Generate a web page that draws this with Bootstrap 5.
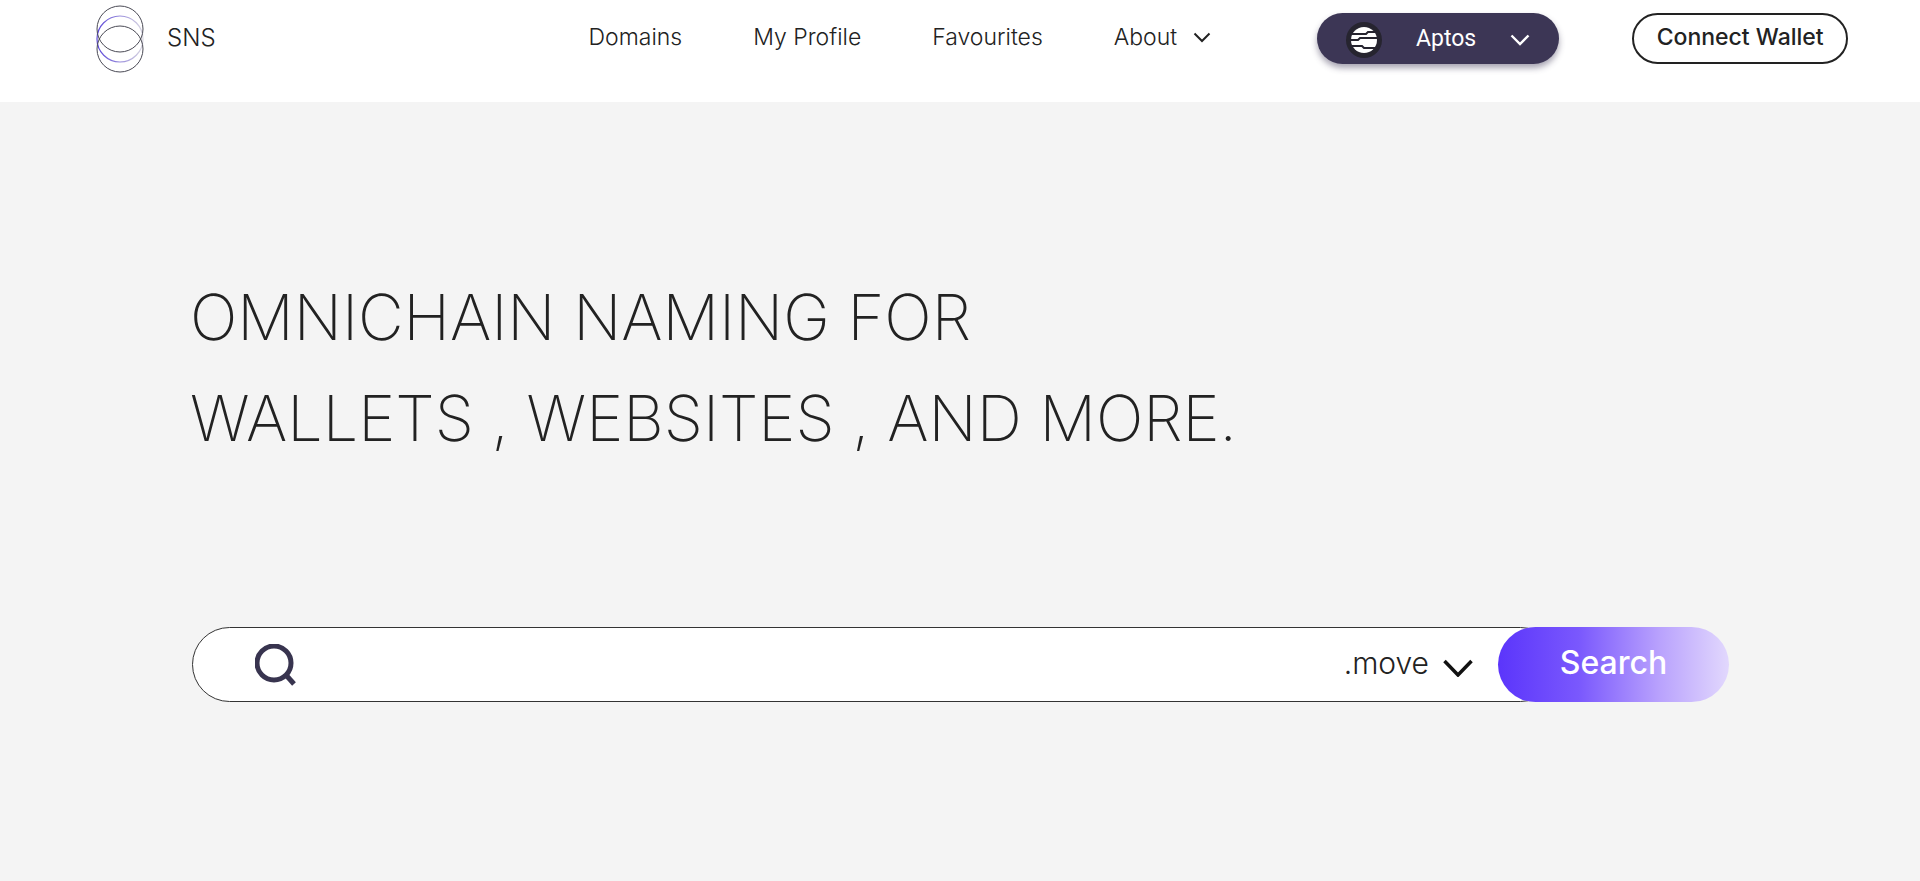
<!DOCTYPE html>
<html lang="en">

<head>
    <meta charset="UTF-8">
    <meta name="viewport" content="width=device-width, initial-scale=1.0">
    <title>SNS</title>
    <link href="https://cdn.jsdelivr.net/npm/bootstrap@5.3.3/dist/css/bootstrap.min.css" rel="stylesheet">
    <style>
        body {
            background: #f4f4f4;
            color: #222;
            font-family: "Inter", "Liberation Sans", sans-serif;
            font-weight: 300;
            min-height: 881px;
            overflow: hidden;
        }

        .top-bar {
            height: 102px;
            background: #fff;
            padding: 0 0 27px 96px;
        }

        .top-bar > * {
            flex-shrink: 0;
        }

        .logo-mark {
            margin-top: 3px;
        }

        .brand-text {
            font-size: 24px;
            color: #222;
            margin-left: 23px;
            text-decoration: none;
        }

        .menu-links {
            margin-left: 373px;
            gap: 71px;
        }

        .menu-links a {
            font-size: 23px;
            color: #222;
            text-decoration: none;
            white-space: nowrap;
        }

        .chain-btn {
            width: 242px;
            height: 51px;
            margin-top: 2px;
            margin-left: 106px;
            background: #3c3655;
            color: #fff;
            border-radius: 26px;
            box-shadow: 0 4px 6px rgba(60, 54, 85, .45);
            font-family: "Roboto", sans-serif;
            font-weight: 400;
            font-size: 23px;
            padding: 2px 28px 0 28px;
        }

        .wallet-btn {
            width: 216px;
            height: 51px;
            margin-top: 2px;
            margin-left: 73px;
            padding: 0 0 2px;
            background: #fff;
            border: 2px solid #222;
            border-radius: 26px;
            color: #222;
            font-size: 23px;
            font-weight: 500;
            white-space: nowrap;
        }

        .hero {
            padding: 0 190px;
        }

        .hero-title {
            margin: 165px 0 0;
            font-size: 62.9px;
            line-height: 101px;
            font-weight: 250;
            color: #222;
        }

        .search-bar {
            width: 1537px;
            height: 75px;
            margin-top: 158px;
            margin-left: 2px;
        }

        .search-field {
            height: 75px;
            margin-right: -60px;
            background: #fff;
            border: 1px solid #333;
            border-radius: 38px;
            padding: 0 84px 0 62px;
        }

        .tld-text {
            font-size: 30px;
            font-weight: 300;
            margin-bottom: 2px;
        }

        .tld-arrow {
            margin-left: 14px;
            margin-top: 6px;
        }

        .search-btn {
            width: 231px;
            height: 75px;
            flex-shrink: 0;
            position: relative;
            border: 0;
            border-radius: 38px;
            background: linear-gradient(90deg, #5b35fb 0%, #7a58fd 35%, #b9a2fd 70%, #e2d8fd 100%);
            color: #fff;
            font-size: 32px;
            font-weight: 500;
            padding-bottom: 5px;
        }
    </style>
</head>

<body>

    <!-- NAVBAR -->
    <nav class="top-bar d-flex align-items-center">
        <svg class="logo-mark" width="48" height="68" viewBox="0 0 48 68" fill="none">
            <defs>
                <linearGradient id="logoFade" x1="0" y1="0" x2="1" y2="0">
                    <stop offset="0" stop-color="#5a45d8" />
                    <stop offset="1" stop-color="#d8d6e0" />
                </linearGradient>
            </defs>
            <circle cx="24" cy="34" r="23" stroke="url(#logoFade)" stroke-width="1.200" />
            <circle cx="24" cy="24" r="23" stroke="#4a4a55" stroke-width="1" />
            <circle cx="24" cy="44" r="23" stroke="#4a4a55" stroke-width="1" />
        </svg>
        <a class="brand-text" href="#">SNS</a>

        <div class="menu-links d-flex align-items-center">
            <a href="#">Domains</a>
            <a href="#">My Profile</a>
            <a href="#">Favourites</a>
            <a href="#" class="d-flex align-items-center gap-3">About
                <svg width="18" height="11" viewBox="0 0 18 11" fill="none">
                    <path d="M1.500 1.500 9 9l7.500-7.500" stroke="#222" stroke-width="2" />
                </svg>
            </a>
        </div>

        <button type="button" class="chain-btn btn d-flex align-items-center justify-content-between">
            <svg width="36" height="36" viewBox="0 0 36 36">
                <circle cx="18" cy="18" r="18" fill="#26242f" />
                <circle cx="18" cy="18" r="13" fill="#fff" />
                <path d="M4 12h16l2-2h10M4 18h8l2-2h20M4 24h12l2 2h14" stroke="#26242f" stroke-width="2" fill="none" />
            </svg>
            <span>Aptos</span>
            <svg width="20" height="12" viewBox="0 0 20 12" fill="none">
                <path d="M1.500 1.500 10 10l8.500-8.500" stroke="#fff" stroke-width="2.400" />
            </svg>
        </button>

        <button type="button" class="wallet-btn btn">Connect Wallet</button>
    </nav>

    <main class="hero">
        <h1 class="hero-title">OMNICHAIN NAMING FOR<br>WALLETS , WEBSITES , AND MORE.</h1>

        <form class="search-bar d-flex">
            <div class="search-field d-flex align-items-center flex-grow-1">
                <svg width="42" height="42" viewBox="0 0 42 42" fill="none">
                    <circle cx="19" cy="19" r="17" stroke="#38344f" stroke-width="5" />
                    <path d="m31 31 8 9" stroke="#38344f" stroke-width="5" />
                </svg>
                <span class="tld-text ms-auto">.move</span>
                <svg class="tld-arrow" width="30" height="18" viewBox="0 0 30 18" fill="none">
                    <path d="M1.500 2 15 16 28.500 2" stroke="#111" stroke-width="3.500" />
                </svg>
            </div>
            <button type="button" class="search-btn">Search</button>
        </form>
    </main>

    <script src="https://cdn.jsdelivr.net/npm/bootstrap@5.3.3/dist/js/bootstrap.bundle.min.js"></script>

</body>

</html>
